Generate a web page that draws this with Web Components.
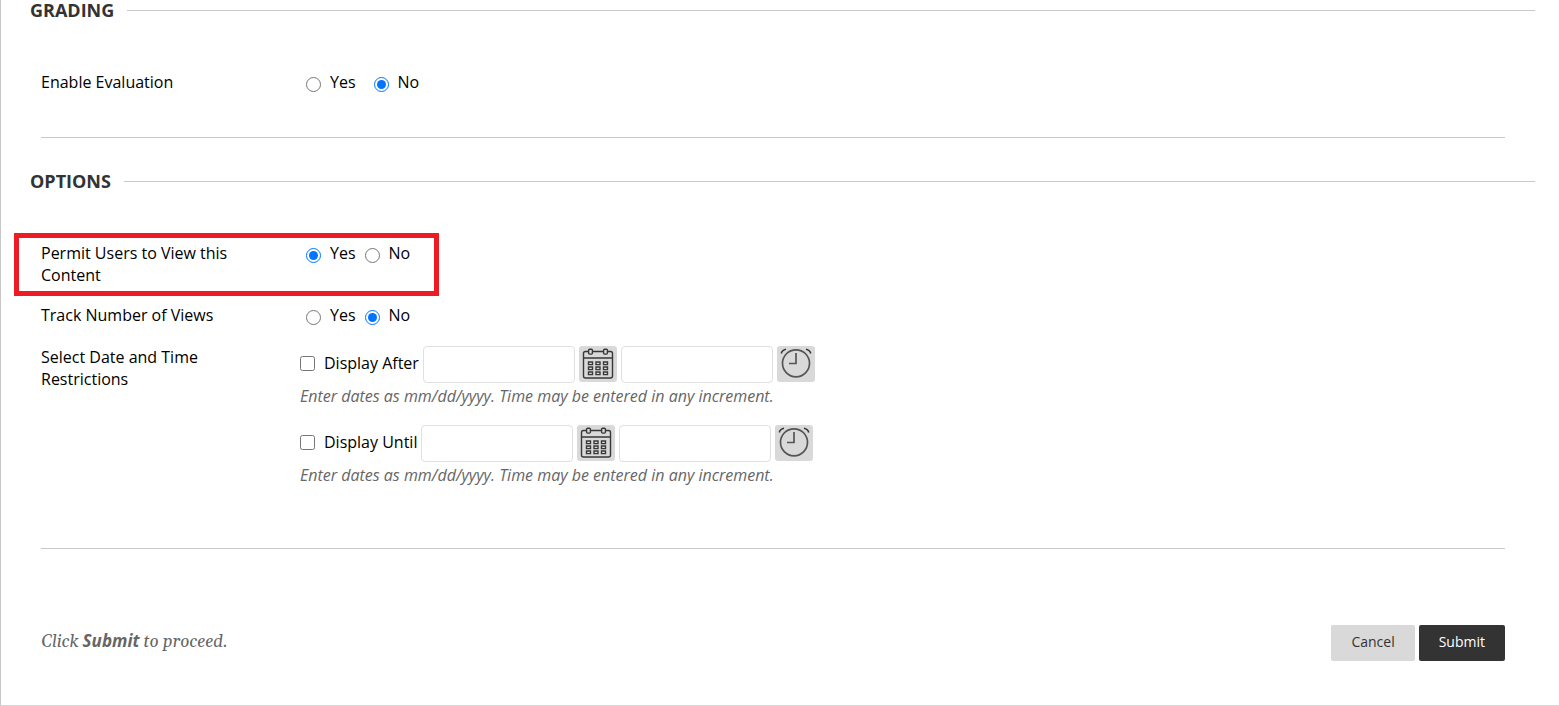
<!DOCTYPE html>
<html lang="en">
<head>
<meta charset="utf-8">
<title>Content options</title>
<style>
  body { margin: 0; background: #fff; color: #000; font: 16px/22px "Open Sans", "Noto Sans", sans-serif; }
</style>
</head>
<body>
<content-form></content-form>

<template id="t-content-form">
  <style>
    :host { display: block; box-sizing: border-box; min-height: 100vh; border-left: 1px solid #c8c8c8; border-bottom: 1px solid #d4d2da; }
  </style>
  <form-section heading="Grading">
    <form-row label="Enable Evaluation"><yes-no-choice label="Enable Evaluation" value="no" wide></yes-no-choice></form-row>
  </form-section>
  <form-section heading="Options" class="options">
    <form-row label="Permit Users to View this Content" highlighted><yes-no-choice label="Permit Users to View this Content" value="yes"></yes-no-choice></form-row>
    <form-row label="Track Number of Views"><yes-no-choice label="Track Number of Views" value="no"></yes-no-choice></form-row>
    <form-row label="Select Date and Time Restrictions">
      <date-restriction label="Display After"></date-restriction>
      <date-restriction label="Display Until"></date-restriction>
    </form-row>
  </form-section>
  <submit-bar></submit-bar>
</template>

<template id="t-form-section">
  <style>
    :host { display: block; padding: 0 24px 0 29px; }
    h2 { display: flex; align-items: center; gap: 13px; margin: 0; font-size: 18px; line-height: 21px; font-weight: 700; color: #333; text-transform: uppercase; }
    h2::after { content: ""; flex: 1; height: 1px; background: #c8c8c8; }
    .rows { display: grid; gap: 18px; margin: 0 30px 0 11px; padding: 50px 0 42px; border-bottom: 1px solid #c8c8c8; }
    :host(.options) { padding-top: 33px; }
    :host(.options) .rows { padding-bottom: 62px; }
  </style>
  <h2></h2>
  <div class="rows"><slot></slot></div>
</template>

<template id="t-form-row">
  <style>
    :host { display: grid; grid-template-columns: 219px 1fr; column-gap: 40px; position: relative; min-height: 24px; }
    :host([highlighted])::after { content: ""; position: absolute; left: -27px; top: -9px; bottom: -10px; width: 415px; border: 5px solid #ed1c24; pointer-events: none; }
    .content { display: grid; gap: 18px; align-content: start; }
  </style>
  <div class="label"></div>
  <div class="content"><slot></slot></div>
</template>

<template id="t-yes-no-choice">
  <style>
    :host { display: block; padding-left: 6px; }
    div { display: flex; gap: 9px; }
    :host([wide]) div { gap: 18px; }
    label { display: flex; gap: 9px; }
    input { width: 15px; height: 15px; margin: 6px 0 0; }
  </style>
  <div role="radiogroup">
    <label><input type="radio" name="choice" value="yes">Yes</label>
    <label><input type="radio" name="choice" value="no">No</label>
  </div>
</template>

<template id="t-date-restriction">
  <style>
    :host { display: block; }
    .fields { display: flex; gap: 4px; }
    label { display: flex; align-items: center; gap: 9px; height: 34px; }
    input[type=checkbox] { width: 15px; height: 15px; margin: 0; }
    input[type=text] { box-sizing: border-box; width: 152px; height: 37px; border: 1px solid #e0e0e0; border-radius: 4px; padding: 0 8px; font: inherit; background: #fff; }
    p { margin: 2px 0 0; font-style: italic; color: #666; }
  </style>
  <div class="fields">
    <label><input type="checkbox"><span></span></label>
    <input type="text" class="date">
    <icon-button icon="calendar" label="Choose date"></icon-button>
    <input type="text" class="time">
    <icon-button icon="clock" label="Choose time"></icon-button>
  </div>
  <p>Enter dates as mm/dd/yyyy. Time may be entered in any increment.</p>
</template>

<template id="t-icon-button">
  <style>
    :host { display: block; }
    button { display: block; width: 38px; height: 36px; padding: 0; border: 0; border-radius: 3px; background: #d9d9d9; }
    svg { display: none; width: 38px; height: 36px; fill: none; }
    :host([icon=calendar]) .calendar, :host([icon=clock]) .clock { display: block; }
  </style>
  <button type="button">
    <svg class="calendar" viewBox="0 0 38 36" stroke="#383838" aria-hidden="true">
      <path d="M9.500 5.500H6.500Q4.500 5.500 4.500 7.500V30Q4.500 32 6.500 32H31.500Q33.500 32 33.500 30V7.500Q33.500 5.500 31.500 5.500H28.500M13.500 5.500H24.500M4.500 12H33.500" stroke-width="1.400"/>
      <rect x="9.600" y="3.300" width="3.800" height="4.800" rx="1" stroke-width="1.400"/>
      <rect x="24.600" y="3.300" width="3.800" height="4.800" rx="1" stroke-width="1.400"/>
      <path d="M9.500 16h4v2.600h-4zM17 16h4v2.600h-4zM24.500 16h4v2.600h-4zM9.500 21h4v2.600h-4zM17 21h4v2.600h-4zM24.500 21h4v2.600h-4zM9.500 26h4v2.600h-4zM17 26h4v2.600h-4zM24.500 26h4v2.600h-4z" stroke-width="1.400"/>
    </svg>
    <svg class="clock" viewBox="0 0 38 36" stroke="#555" aria-hidden="true">
      <circle cx="19" cy="17.300" r="13.500" stroke-width="1.700"/>
      <path d="M19 7V17.500H12" stroke-width="1.700"/>
      <path d="M4.300 7.500Q5 4 9 3.200M29 3.200Q33 4 33.700 7.500" stroke="#333" stroke-width="1.500"/>
    </svg>
  </button>
</template>

<template id="t-submit-bar">
  <style>
    :host { display: flex; justify-content: space-between; align-items: flex-start; padding: 76px 54px 44px 40px; }
    p { margin: 5px 0 0; font-family: Georgia, Gelasio, "Liberation Serif", serif; font-size: 17px; font-style: italic; color: #666; }
    strong { font-family: "Open Sans", sans-serif; }
    div { display: flex; gap: 4px; }
    button { height: 36px; padding: 0 20px 2px; border: 0; border-radius: 2px; font: 14px/34px "Open Sans", sans-serif; background: #d9d9d9; color: #333; }
    .primary { background: #333; color: #fff; }
  </style>
  <p>Click <strong>Submit</strong> to proceed.</p>
  <div><button type="button">Cancel</button><button type="submit" class="primary">Submit</button></div>
</template>

<script>
  class TemplateElement extends HTMLElement {
    constructor() {
      super();
      this.attachShadow({ mode: "open" });
    }
    connectedCallback() {
      if (this.shadowRoot.childNodes.length) return;
      const template = document.getElementById("t-" + this.localName);
      this.shadowRoot.append(template.content.cloneNode(true));
      this.render(this.shadowRoot);
    }
    render() {}
  }

  customElements.define("icon-button", class extends TemplateElement {
    render(root) {
      root.querySelector("button").setAttribute("aria-label", this.getAttribute("label"));
    }
  });
  customElements.define("yes-no-choice", class extends TemplateElement {
    render(root) {
      root.querySelector("div").setAttribute("aria-label", this.getAttribute("label"));
      root.querySelector(`input[value="${this.getAttribute("value")}"]`).checked = true;
    }
  });
  customElements.define("date-restriction", class extends TemplateElement {
    render(root) {
      const label = this.getAttribute("label");
      root.querySelector("span").textContent = label;
      root.querySelector(".date").setAttribute("aria-label", label + " date");
      root.querySelector(".time").setAttribute("aria-label", label + " time");
    }
  });
  customElements.define("form-row", class extends TemplateElement {
    render(root) {
      root.querySelector(".label").textContent = this.getAttribute("label");
    }
  });
  customElements.define("form-section", class extends TemplateElement {
    render(root) {
      root.querySelector("h2").textContent = this.getAttribute("heading");
    }
  });
  customElements.define("submit-bar", class extends TemplateElement {});
  customElements.define("content-form", class extends TemplateElement {});
</script>
</body>
</html>
